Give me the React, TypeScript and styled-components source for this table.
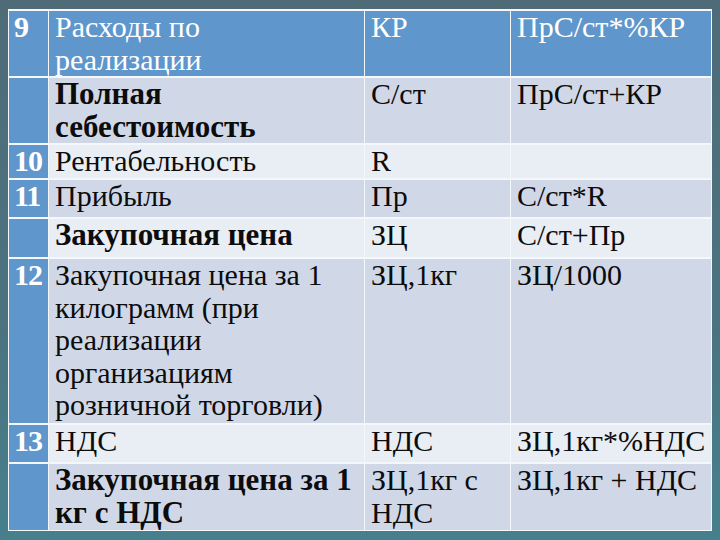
import { Fragment } from 'react';

import styled, { createGlobalStyle } from 'styled-components';

const SERIF = `'Liberation Serif', 'Times New Roman', serif`;

const GlobalStyle = createGlobalStyle`
  html, body {
    margin: 0;
    padding: 0;
  }
  body {
    width: 720px;
    height: 540px;
    overflow: hidden;
    font-family: ${SERIF};
  }
`;

const COLORS = {
  ACCENT: '#5f96cb',
  BAND_DARK: '#d0d8e8',
  BAND_LIGHT: '#e9edf4',
  TEXT: '#0c0c0c',
  BORDER: '#f4f7fb',
};

const Slide = styled.div`
  width: 720px;
  height: 540px;
  box-sizing: border-box;
  padding: 9px 9px 11px 8px;
  background: linear-gradient(180deg, #4f6b78 0%, #4b7380 60%, #46808c 100%);
`;

const Table = styled.table`
  width: 703px;
  border-collapse: collapse;
  table-layout: fixed;

  col.num {
    width: 40px;
  }
  col.name {
    width: 316px;
  }
  col.sign {
    width: 146px;
  }
  col.formula {
    width: 201px;
  }
`;

const Row = styled.tr<{ $band: 'head' | 'dark' | 'light' }>`
  background: ${({ $band }) =>
    $band === 'head' ? COLORS.ACCENT : $band === 'dark' ? COLORS.BAND_DARK : COLORS.BAND_LIGHT};
  color: ${({ $band }) => ($band === 'head' ? '#ffffff' : COLORS.TEXT)};
`;

const Cell = styled.td<{ $bold?: boolean }>`
  vertical-align: top;
  padding: 0 0 0 6px;
  border: 1px solid ${COLORS.BORDER};
  border-top-width: 2px;
  font-family: ${SERIF};
  font-size: ${({ $bold }) => ($bold ? '31px' : '30px')};
  line-height: 32.5px;
  font-weight: ${({ $bold }) => ($bold ? 700 : 400)};
  white-space: nowrap;
`;

const NumCell = styled(Cell)`
  background: ${COLORS.ACCENT};
  color: #ffffff;
  font-size: 30px;
  font-weight: 700;
  padding-left: 5px;
  letter-spacing: -1px;
`;

type RowData = {
  num: string;
  name: string[];
  sign: string[];
  formula: string;
  bold?: boolean;
  height: number;
};

const rows: RowData[] = [
  { num: '', name: ['Полная', 'себестоимость'], sign: ['С/ст'], formula: 'ПрС/ст+КР', bold: true, height: 67 },
  { num: '10', name: ['Рентабельность'], sign: ['R'], formula: '', height: 35 },
  { num: '11', name: ['Прибыль'], sign: ['Пр'], formula: 'С/ст*R', height: 39 },
  { num: '', name: ['Закупочная цена'], sign: ['ЗЦ'], formula: 'С/ст+Пр', bold: true, height: 40 },
  {
    num: '12',
    name: ['Закупочная цена за 1', 'килограмм (при', 'реализации', 'организациям', 'розничной торговли)'],
    sign: ['ЗЦ,1кг'],
    formula: 'ЗЦ/1000',
    height: 166,
  },
  { num: '13', name: ['НДС'], sign: ['НДС'], formula: 'ЗЦ,1кг*%НДС', height: 39 },
  {
    num: '',
    name: ['Закупочная цена за 1', 'кг с НДС'],
    sign: ['ЗЦ,1кг с', 'НДС'],
    formula: 'ЗЦ,1кг + НДС',
    bold: true,
    height: 67,
  },
];

function Lines({ lines }: { lines: string[] }) {
  return (
    <>
      {lines.map((line, i) => (
        <Fragment key={i}>
          {i > 0 && <br />}
          {line}
        </Fragment>
      ))}
    </>
  );
}

function App() {
  return (
    <>
      <GlobalStyle />
      <Slide>
        <Table>
          <colgroup>
            <col className='num' />
            <col className='name' />
            <col className='sign' />
            <col className='formula' />
          </colgroup>
          <tbody>
            <Row $band='head' style={{ height: 67 }}>
              <NumCell>9</NumCell>
              <Cell>
                <Lines lines={['Расходы по', 'реализации']} />
              </Cell>
              <Cell>КР</Cell>
              <Cell>ПрС/ст*%КР</Cell>
            </Row>
            {rows.map((row, i) => (
              <Row key={i} $band={i % 2 === 0 ? 'dark' : 'light'} style={{ height: row.height }}>
                <NumCell>{row.num}</NumCell>
                <Cell $bold={row.bold}>
                  <Lines lines={row.name} />
                </Cell>
                <Cell>
                  <Lines lines={row.sign} />
                </Cell>
                <Cell>{row.formula}</Cell>
              </Row>
            ))}
          </tbody>
        </Table>
      </Slide>
    </>
  );
}

export default App;
